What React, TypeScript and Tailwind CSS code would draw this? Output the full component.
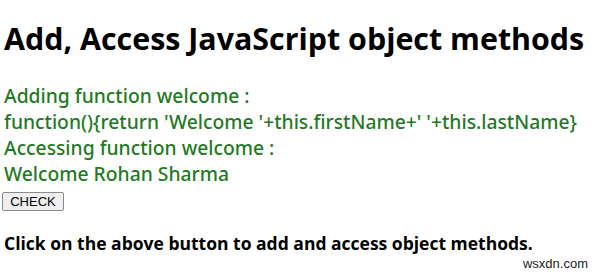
import React from "react";

const lines = [
  "Adding function welcome :",
  "function(){return 'Welcome '+this.firstName+' '+this.lastName}",
  "Accessing function welcome :",
  "Welcome Rohan Sharma",
];

export default function App() {
  return (
    <div className="relative w-[600px] h-[274px] bg-white overflow-hidden px-[4px] font-['Open_Sans',sans-serif] text-black">
      <h1 className="mt-[21px] text-[30.4px] leading-[36px] font-bold whitespace-nowrap">
        Add, Access JavaScript object methods
      </h1>

      <div className="mt-[26px] text-[19.3px] leading-[26px] font-medium font-['Noto_Sans',sans-serif] text-[#1f7a1f] whitespace-nowrap">
        {lines.map((l) => (
          <div key={l}>{l}</div>
        ))}
      </div>

      <button
        type="button"
        className="-ml-[2px] mt-[5px] h-[19px] w-[62px] flex items-center justify-center border border-[#8a8a8a] bg-[#efefef] rounded-[2px] text-[13px] leading-none font-['Liberation_Sans',Arial,sans-serif]"
      >
        CHECK
      </button>

      <h3 className="mt-[21px] text-[17.5px] leading-[22px] font-bold whitespace-nowrap">
        Click on the above button to add and access object methods.
      </h3>

      <span className="absolute right-[12px] bottom-[2px] text-[13px] leading-[16px] text-[#222] font-['Liberation_Sans',Arial,sans-serif]">
        wsxdn.com
      </span>
    </div>
  );
}
